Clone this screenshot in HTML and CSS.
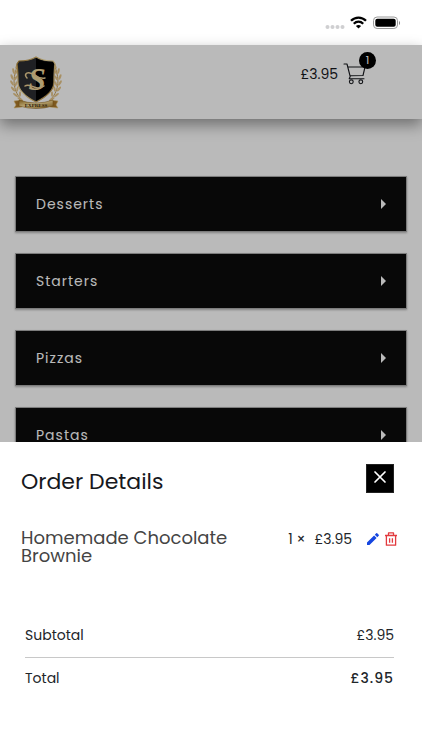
FILE: index.html
```html
<!DOCTYPE html>
<html lang="en">
<head>
  <meta charset="UTF-8">
  <meta name="viewport" content="width=device-width, initial-scale=1">
  <title>Order Details</title>
  <link rel="stylesheet" href="styles.css">
</head>
<body>

<div class="status-bar">
  <svg width="20" height="6" viewBox="0 0 20 6" fill="#cfcfd1">
    <circle cx="2.5" cy="3" r="2"/><circle cx="7.5" cy="3" r="2"/>
    <circle cx="12.5" cy="3" r="2"/><circle cx="17.5" cy="3" r="2"/>
  </svg>
  <svg class="wifi" width="17" height="13" viewBox="0 0 17 13" fill="none" stroke="#000" stroke-width="2.3">
    <path d="M1 4.8C5.2 .5 11.8 .5 16 4.8"/>
    <path d="M3.8 7.7c2.7-2.7 6.7-2.7 9.4 0"/>
    <path d="M8.5 12.6 5.9 10c1.5-1.4 3.7-1.4 5.2 0z" fill="#000" stroke="none"/>
  </svg>
  <svg class="battery" width="28" height="14" viewBox="0 0 28 14">
    <rect x=".5" y="1" width="24" height="11.5" rx="3.6" fill="none" stroke="#999"/>
    <rect x="2.3" y="2.7" width="20.4" height="8" rx="2" fill="#000"/>
    <path d="M26 5v4c1.4-.7 1.4-3.3 0-4z" fill="#888"/>
  </svg>
</div>

<header class="header">
  <a href="#" class="logo" aria-label="Home">
    <svg width="52" height="54" viewBox="0 0 52 54">
      <defs>
        <linearGradient id="gold" x1="0" y1="0" x2="1" y2="1">
          <stop offset="0" stop-color="#a57824"/><stop offset=".45" stop-color="#ffe7a4"/><stop offset="1" stop-color="#a06e1c"/>
        </linearGradient>
        <g id="wreath" fill="#e6c68a">
          <path d="M7 11c-5 13-4 25 6 34" fill="none" stroke="#c9a25a"/>
          <ellipse cx="7" cy="10" rx="1.1" ry="3" transform="rotate(25 7 10)"/>
          <ellipse cx="3.5" cy="15" rx="1.1" ry="3" transform="rotate(-12 3.5 15)"/>
          <ellipse cx="6.5" cy="16" rx="1" ry="2.8" transform="rotate(35 6.5 16)"/>
          <ellipse cx="2" cy="21" rx="1.1" ry="3" transform="rotate(-20 2 21)"/>
          <ellipse cx="5.8" cy="22" rx="1" ry="2.8" transform="rotate(30 5.8 22)"/>
          <ellipse cx="2" cy="27" rx="1.1" ry="3" transform="rotate(-30 2 27)"/>
          <ellipse cx="6" cy="28" rx="1" ry="2.8" transform="rotate(22 6 28)"/>
          <ellipse cx="3" cy="33" rx="1.1" ry="3" transform="rotate(-40 3 33)"/>
          <ellipse cx="7.4" cy="33" rx="1" ry="2.8" transform="rotate(12 7.4 33)"/>
          <ellipse cx="5.5" cy="39" rx="1.1" ry="3" transform="rotate(-52 5.5 39)"/>
          <ellipse cx="10" cy="38" rx="1" ry="2.8"/>
          <ellipse cx="10" cy="43" rx="1.1" ry="3" transform="rotate(-62 10 43)"/>
        </g>
      </defs>
      <use href="#wreath"/>
      <use href="#wreath" transform="matrix(-1 0 0 1 52 0)"/>
      <path d="M26 1c5 3 11 4 17 4l2 3c-1 7-1 13-1 18 0 9-8 15-18 20C16 41 8 35 8 26c0-5 0-11-1-18l2-3c6 0 12-1 17-4z" fill="#2b2d30" stroke="url(#gold)" stroke-width="1.2"/>
      <path d="M26 2c5 3 11 4 17 4l1 2c-1 7-1 13-1 18 0 8-7 14-17 19z" fill="#000"/>
      <text class="logo-letter" x="27" y="34" text-anchor="middle">S</text>
      <path d="M17 22c-3-3-1-6 3-5 5 1 9 7 15 5M15 30c5-4 11 6 19 0" fill="none" stroke="#ecd095" stroke-width="1.5" stroke-linecap="round"/>
      <path d="m4 45 8-1v7l-8 1 2-3zm44 0-8-1v7l8 1-2-3z" fill="#ad792a" stroke="#edcd83" stroke-width=".6"/>
      <path d="M9 44q17 6 34 0v6q-17 5-34 0z" fill="url(#gold)" stroke="#8a611e" stroke-width=".5"/>
      <text class="logo-ribbon" x="26" y="51" text-anchor="middle">EXPRESS</text>
    </svg>
  </a>
  <a href="#order" class="cart">
    <span>£3.95</span>
    <span class="cart-icon">
      <svg width="24" height="22" viewBox="0 0 24 22" fill="none" stroke="#16181d" stroke-width="1.1" stroke-linecap="round" stroke-linejoin="round">
        <path d="M1 1h3l3.2 12.5-1 2.3H21M4.7 4H22l-2 8.5L7 12.8"/>
        <circle cx="8.3" cy="18.8" r="1.9"/><circle cx="17.8" cy="18.8" r="1.9"/>
      </svg>
      <span class="badge">1</span>
    </span>
  </a>
</header>

<main class="menu">
  <button class="category">Desserts</button>
  <button class="category">Starters</button>
  <button class="category">Pizzas</button>
  <button class="category">Pastas</button>
</main>

<div class="backdrop"></div>

<section class="sheet" id="order">
  <div class="sheet-head">
    <h2>Order Details</h2>
    <button class="close" aria-label="Close">
      <svg width="14" height="14" viewBox="0 0 14 14" stroke="#fff" stroke-width="1.7" stroke-linecap="round"><path d="m2 2 10 10M12 2 2 12"/></svg>
    </button>
  </div>

  <div class="item">
    <h3>Homemade Chocolate Brownie</h3>
    <div class="item-side">
      <span>1 ×</span>
      <span class="price">£3.95</span>
      <button class="icon-btn" aria-label="Edit">
        <svg width="12" height="12" viewBox="0 0 12 12" fill="#1546e0"><path d="M0 9.5 7.1 2.4l2.5 2.5L2.5 12H0zM7.8 1.7 9.2.3q.5-.5 1 0l1.5 1.5q.5.5 0 1l-1.4 1.4z"/></svg>
      </button>
      <button class="icon-btn" aria-label="Remove">
        <svg width="12" height="14" viewBox="0 0 12 14" fill="none" stroke="#e23a3e" stroke-width="1.3" stroke-linejoin="round"><path d="M0 3.5h12M3.5 3.5V.9h5v2.6M1.4 3.5v9.7h9.2V3.5M4.6 6.2v4.5M7.4 6.2v4.5"/></svg>
      </button>
    </div>
  </div>

  <table class="totals">
    <tr><th scope="row">Subtotal</th><td>£3.95</td></tr>
    <tr class="total"><th scope="row">Total</th><td>£3.95</td></tr>
  </table>
</section>

</body>
</html>
```
FILE: styles.css
```css
* {
  box-sizing: border-box;
}
body {
  margin: 0;
  height: 100vh;
  overflow: hidden;
  font-family: Poppins, Inter, sans-serif;
  font-size: 14px;
  color: #212529;
  background-color: #fff;
}
button {
  font-family: inherit;
  cursor: pointer;
}
svg {
  display: block;
}
.status-bar {
  height: 45px;
  padding: 0 21px 0 0;
  display: flex;
  align-items: center;
  justify-content: flex-end;
}
.status-bar svg:first-child {
  margin-top: 8px;
}
.wifi {
  margin: 0 6px 0 5px;
}
.header {
  display: flex;
  justify-content: space-between;
  align-items: flex-start;
  height: 74px;
  padding: 11px 55px 0 10px;
  background-color: #fff;
  box-shadow: 0 6px 14px rgba(0, 0, 0, 0.4);
}
.logo-letter {
  font-family: "Liberation Serif", serif;
  font-size: 31px;
  font-weight: bold;
  font-style: italic;
  fill: #f0d79c;
}
.logo-ribbon {
  font-family: "Liberation Serif", serif;
  font-size: 5px;
  font-weight: bold;
  fill: #39270b;
}
.cart {
  display: flex;
  align-items: center;
  gap: 5px;
  padding-top: 7px;
  color: #16181d;
  text-decoration: none;
}
.cart-icon {
  position: relative;
}
.badge {
  position: absolute;
  top: -11px;
  right: -9px;
  width: 17px;
  height: 17px;
  border-radius: 50%;
  background-color: #000;
  color: #fff;
  font-size: 11px;
  line-height: 17px;
  text-align: center;
}
.menu {
  display: flex;
  flex-direction: column;
  gap: 21px;
  padding: 57px 15px 0;
}
.category {
  display: flex;
  flex-shrink: 0;
  justify-content: space-between;
  align-items: center;
  height: 56px;
  padding: 0 20px;
  border: 1px solid #aaa;
  background-color: #0b0b0b;
  box-shadow: 0 1px 2px rgba(0, 0, 0, 0.3);
  color: #fff;
  font-size: 14px;
  letter-spacing: 1px;
}
.category::after {
  content: "";
  border-left: 5px solid #fff;
  border-top: 5px solid transparent;
  border-bottom: 5px solid transparent;
}
.backdrop {
  position: fixed;
  inset: 45px 0 0;
  background-color: rgba(0, 0, 0, 0.27);
}
.sheet {
  position: fixed;
  left: 0;
  right: 0;
  bottom: 0;
  padding: 22px 25px 50px 21px;
  background-color: #fff;
}
.sheet-head {
  display: flex;
  justify-content: space-between;
  align-items: flex-start;
  padding-right: 3px;
}
h2, h3 {
  margin: 0;
  font-weight: 400;
}
h2 {
  font-size: 22px;
  line-height: 36px;
  color: #16181d;
}
.close {
  width: 28px;
  height: 29px;
  padding: 0 0 3px;
  display: grid;
  place-items: center;
  border: 1px solid #222;
  background-color: #000;
}
.item {
  display: flex;
  justify-content: space-between;
  align-items: flex-start;
  margin-top: 29px;
}
h3 {
  width: 60%;
  font-size: 18px;
  line-height: 18px;
  color: #444;
}
.item-side {
  display: flex;
  align-items: center;
  line-height: 20px;
}
.price {
  margin: 0 15px 0 9px;
}
.icon-btn {
  padding: 0;
  border: none;
  background: none;
}
.icon-btn + .icon-btn {
  margin-left: 6px;
}
.totals {
  width: calc(100% - 7px);
  margin: 49px 3px 0 4px;
  border-collapse: collapse;
}
.totals th,
.totals td {
  height: 43px;
  padding: 0;
  font-weight: 400;
  text-align: left;
}
.totals td {
  text-align: right;
}
.totals .total {
  border-top: 1px solid #c8c8c8;
}
.totals .total td {
  font-weight: 500;
  letter-spacing: 1px;
}
```
